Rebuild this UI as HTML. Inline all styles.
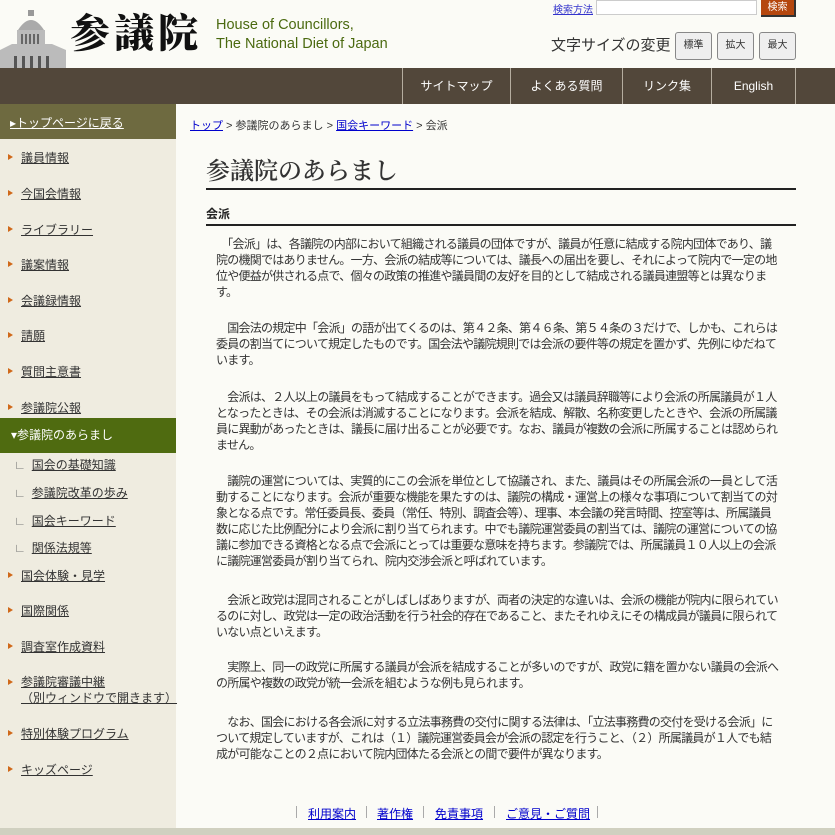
<!DOCTYPE html>
<html><head><meta charset="utf-8"><style>
*{margin:0;padding:0;box-sizing:border-box}
body{width:835px;height:835px;background:#fbfbf6;font-family:"Liberation Sans","Noto Sans CJK JP",sans-serif;position:relative;overflow:hidden;color:#333}
a{color:inherit}
.abs{position:absolute}
#nav{left:0;top:68px;width:835px;height:36px;background:#52473a}
.ni{position:absolute;top:0;height:36px;line-height:36px;color:#fff;font-size:12px;text-align:center;border-left:1px solid #b5ad9f}
#side{left:0;top:104px;width:176px;height:724px;background:#efece0}
.si{position:absolute;left:8px;font-size:12px;color:#333;text-decoration:underline;white-space:nowrap}
.si:before{content:"";position:absolute;left:0;top:5px;border-left:5px solid #d0691a;border-top:3px solid transparent;border-bottom:3px solid transparent}
.si span{margin-left:13px}
.sub{position:absolute;left:14px;font-size:12px;color:#333;white-space:nowrap}
.sub b{font-weight:normal;color:#777;margin-right:6px}
.sub u{text-decoration:underline}
p.t{position:absolute;left:216px;font-size:12px;line-height:16px;color:#333;white-space:nowrap;letter-spacing:-0.75px}
</style></head><body>
<svg class="abs" style="left:0;top:0" width="66" height="68" viewBox="0 0 66 68">
<rect x="28" y="10" width="6" height="6" fill="#999"/>
<path d="M18 30 Q31 10 44 30 Z" fill="#aaa"/>
<rect x="17" y="30" width="28" height="16" fill="#bbb"/>
<g fill="#666"><rect x="21" y="34" width="2" height="10"/><rect x="25" y="34" width="2" height="10"/><rect x="29" y="34" width="2" height="10"/><rect x="33" y="34" width="2" height="10"/><rect x="37" y="34" width="2" height="10"/></g>
<path d="M0 50 L12 44 L52 44 L66 50 L66 68 L0 68 Z" fill="#bbb"/>
<g fill="#555"><rect x="14" y="56" width="3" height="12"/><rect x="22" y="56" width="3" height="12"/><rect x="30" y="56" width="3" height="12"/><rect x="38" y="56" width="3" height="12"/><rect x="46" y="56" width="3" height="12"/></g>
</svg>
<div class="abs" style="left:70px;top:6px;font-family:'Noto Serif CJK SC',serif;font-size:40px;font-weight:900;color:#111;letter-spacing:4px;line-height:50px">参議院</div>
<div class="abs" style="left:216px;top:16px;font-size:14.5px;line-height:19px;color:#4b6a10">House of Councillors,<br>The National Diet of Japan</div>
<a class="abs" href="#" style="left:553px;top:1px;font-size:10px;color:#33c">検索方法</a>
<div class="abs" style="left:596px;top:0;width:161px;height:15px;border:1px solid #ccc;background:#fff"></div>
<div class="abs" style="left:761px;top:0;width:35px;height:17px;background:#b5470e;color:#fff;font-size:10px;text-align:center;line-height:16px;border-right:2px solid #333;border-bottom:2px solid #333">検索</div>
<div class="abs" style="left:551px;top:34px;font-size:15px;color:#333">文字サイズの変更</div>
<div class="abs" style="left:675px;top:32px;width:37px;height:28px;border:1px solid #888;border-radius:3px;background:#efefef;font-size:10px;text-align:center;line-height:26px">標準</div>
<div class="abs" style="left:717px;top:32px;width:37px;height:28px;border:1px solid #888;border-radius:3px;background:#efefef;font-size:10px;text-align:center;line-height:26px">拡大</div>
<div class="abs" style="left:759px;top:32px;width:37px;height:28px;border:1px solid #888;border-radius:3px;background:#efefef;font-size:10px;text-align:center;line-height:26px">最大</div>
<div id="nav" class="abs">
<div class="ni" style="left:402px;width:108px">サイトマップ</div>
<div class="ni" style="left:510px;width:112px">よくある質問</div>
<div class="ni" style="left:622px;width:89px">リンク集</div>
<div class="ni" style="left:711px;width:84px">English</div>
<div class="ni" style="left:795px;width:40px"></div>
</div>
<div id="side" class="abs">
<div class="abs" style="left:0;top:0;width:176px;height:35px;background:#6e6a40"></div>
<div class="abs" style="left:10px;top:10px;font-size:12px;color:#fff;text-decoration:underline">▸トップページに戻る</div>
<a class="si" style="top:45px"><span>議員情報</span></a>
<a class="si" style="top:81px"><span>今国会情報</span></a>
<a class="si" style="top:117px"><span>ライブラリー</span></a>
<a class="si" style="top:152px"><span>議案情報</span></a>
<a class="si" style="top:188px"><span>会議録情報</span></a>
<a class="si" style="top:223px"><span>請願</span></a>
<a class="si" style="top:259px"><span>質問主意書</span></a>
<a class="si" style="top:295px"><span>参議院公報</span></a>
<div class="abs" style="left:0;top:314px;width:176px;height:35px;background:#4f6b10;color:#fff;font-size:12px;line-height:35px;padding-left:11px">▾参議院のあらまし</div>
<div class="sub" style="top:352px"><b>∟</b><u>国会の基礎知識</u></div>
<div class="sub" style="top:380px"><b>∟</b><u>参議院改革の歩み</u></div>
<div class="sub" style="top:408px"><b>∟</b><u>国会キーワード</u></div>
<div class="sub" style="top:435px"><b>∟</b><u>関係法規等</u></div>
<a class="si" style="top:463px"><span>国会体験・見学</span></a>
<a class="si" style="top:498px"><span>国際関係</span></a>
<a class="si" style="top:534px"><span>調査室作成資料</span></a>
<a class="si" style="top:570px;line-height:16px"><span>参議院審議中継</span><br><span>（別ウィンドウで開きます）</span></a>
<a class="si" style="top:621px"><span>特別体験プログラム</span></a>
<a class="si" style="top:657px"><span>キッズページ</span></a>
</div>
<div class="abs" style="left:190px;top:117px;font-size:11px;color:#333"><a href="#" style="color:#00c">トップ</a> &gt; 参議院のあらまし &gt; <a href="#" style="color:#00c">国会キーワード</a> &gt; 会派</div>
<div class="abs" style="left:206px;top:152px;width:590px;height:38px;border-bottom:2px solid #222;font-family:'Noto Serif CJK SC',serif;font-size:24px;font-weight:600;color:#333;line-height:34px">参議院のあらまし</div>
<div class="abs" style="left:206px;top:205px;width:590px;height:21px;border-bottom:2px solid #222;font-size:12px;font-weight:bold;color:#222">会派</div>
<p class="t" style="top:236px">　「会派」は、各議院の内部において組織される議員の団体ですが、議員が任意に結成する院内団体であり、議<br>院の機関ではありません。一方、会派の結成等については、議長への届出を要し、それによって院内で一定の地<br>位や便益が供される点で、個々の政策の推進や議員間の友好を目的として結成される議員連盟等とは異なりま<br>す。</p>
<p class="t" style="top:320px">　国会法の規定中「会派」の語が出てくるのは、第４２条、第４６条、第５４条の３だけで、しかも、これらは<br>委員の割当てについて規定したものです。国会法や議院規則では会派の要件等の規定を置かず、先例にゆだねて<br>います。</p>
<p class="t" style="top:389px">　会派は、２人以上の議員をもって結成することができます。過会又は議員辞職等により会派の所属議員が１人<br>となったときは、その会派は消滅することになります。会派を結成、解散、名称変更したときや、会派の所属議<br>員に異動があったときは、議長に届け出ることが必要です。なお、議員が複数の会派に所属することは認められ<br>ません。</p>
<p class="t" style="top:473px">　議院の運営については、実質的にこの会派を単位として協議され、また、議員はその所属会派の一員として活<br>動することになります。会派が重要な機能を果たすのは、議院の構成・運営上の様々な事項について割当ての対<br>象となる点です。常任委員長、委員（常任、特別、調査会等）、理事、本会議の発言時間、控室等は、所属議員<br>数に応じた比例配分により会派に割り当てられます。中でも議院運営委員の割当ては、議院の運営についての協<br>議に参加できる資格となる点で会派にとっては重要な意味を持ちます。参議院では、所属議員１０人以上の会派<br>に議院運営委員が割り当てられ、院内交渉会派と呼ばれています。</p>
<p class="t" style="top:592px">　会派と政党は混同されることがしばしばありますが、両者の決定的な違いは、会派の機能が院内に限られてい<br>るのに対し、政党は一定の政治活動を行う社会的存在であること、またそれゆえにその構成員が議員に限られて<br>いない点といえます。</p>
<p class="t" style="top:659px">　実際上、同一の政党に所属する議員が会派を結成することが多いのですが、政党に籍を置かない議員の会派へ<br>の所属や複数の政党が統一会派を組むような例も見られます。</p>
<p class="t" style="top:714px">　なお、国会における各会派に対する立法事務費の交付に関する法律は、「立法事務費の交付を受ける会派」に<br>ついて規定していますが、これは（１）議院運営委員会が会派の認定を行うこと、（２）所属議員が１人でも結<br>成が可能なことの２点において院内団体たる会派との間で要件が異なります。</p>
<div class="abs" style="left:296px;top:806px;width:2px;height:12px;border-left:1px solid #aaa"></div>
<a class="abs" href="#" style="left:308px;top:805px;font-size:12px;color:#00c">利用案内</a>
<div class="abs" style="left:366px;top:806px;height:12px;border-left:1px solid #aaa"></div>
<a class="abs" href="#" style="left:377px;top:805px;font-size:12px;color:#00c">著作権</a>
<div class="abs" style="left:423px;top:806px;height:12px;border-left:1px solid #aaa"></div>
<a class="abs" href="#" style="left:435px;top:805px;font-size:12px;color:#00c">免責事項</a>
<div class="abs" style="left:494px;top:806px;height:12px;border-left:1px solid #aaa"></div>
<a class="abs" href="#" style="left:506px;top:805px;font-size:12px;color:#00c">ご意見・ご質問</a>
<div class="abs" style="left:597px;top:806px;height:12px;border-left:1px solid #aaa"></div>
<div class="abs" style="left:0;top:828px;width:835px;height:7px;background:#d0d0c0"></div>
</body></html>
